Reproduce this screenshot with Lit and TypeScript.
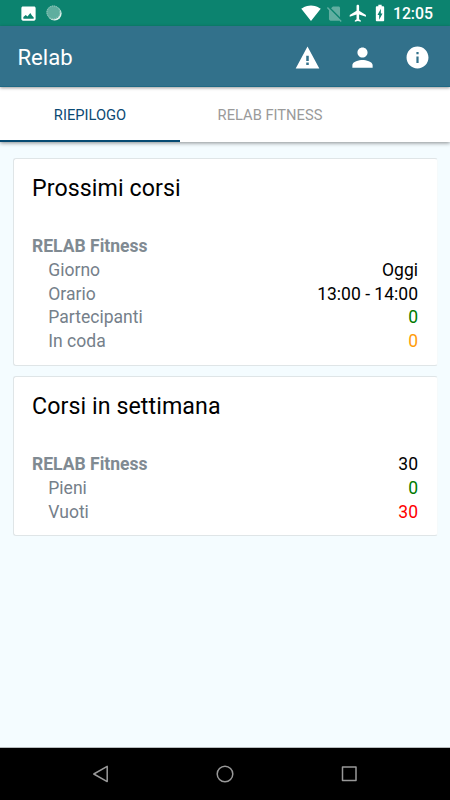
import { LitElement, html, css, svg } from "lit";
import { customElement, property } from "lit/decorators.js";

interface Row {
  label: string;
  value: string;
  tone?: string;
  head?: boolean;
}

@customElement("info-card")
class InfoCard extends LitElement {
  @property() heading = "";
  @property({ attribute: false }) rows: Row[] = [];

  static styles = css`
    :host {
      display: block;
      box-sizing: border-box;
      background: #fff;
      border: 1px solid #dfe5e7;
      border-right-color: #f5fafb;
      border-radius: 3px;
      padding: 0 18.5px 12px 18px;
    }
    .heading {
      height: 75px;
      line-height: 58px;
      font-size: 23.2px;
      letter-spacing: 0.08px;
      color: #000;
    }
    .row {
      display: flex;
      justify-content: space-between;
      height: 23.8px;
      line-height: 24px;
      font-size: 17.55px;
      color: #000;
    }
    .label {
      color: #75808a;
      padding-left: 16.3px;
    }
    .head {
      font-weight: 700;
      padding-left: 0;
      color: #808a92;
    }
    .green { color: #007a00; }
    .orange { color: #ff9d0a; }
    .red { color: #ff0000; }
  `;

  render() {
    return html`
      <div class="heading">${this.heading}</div>
      ${this.rows.map(
        (r) => html`<div class="row">
          <span class="label ${r.head ? "head" : ""}">${r.label}</span>
          <span class=${r.tone ?? ""}>${r.value}</span>
        </div>`
      )}
    `;
  }
}

const icon = (cls: string, box: string, d: string) =>
  html`<svg class=${cls} viewBox=${box} fill="currentColor">${svg`<path d=${d} />`}</svg>`;

const WIFI = "M12.01 21.49L23.64 7c-.45-.34-4.93-4-11.64-4C5.28 3 .81 6.66.36 7l11.63 14.49.01.01.01-.01z";
const NO_SIM = "M18.99 5c0-1.1-.89-2-1.99-2h-7L7.66 5.34 19 16.68 18.99 5zM3.65 3.88L2.38 5.15 5 7.77V19c0 1.1.9 2 2 2h10.01c.35 0 .67-.1.96-.26l1.88 1.88 1.27-1.27L3.65 3.88z";
const PLANE = "M21 16v-2l-8-5V3.5c0-.83-.67-1.5-1.5-1.5S10 2.67 10 3.5V9l-8 5v2l8-2.5V19l-2 1.5V22l3.5-1 3.5 1v-1.5L13 19v-5.5l8 2.5z";
const BATTERY = "M15.67 4H14V2h-4v2H8.33C7.6 4 7 4.6 7 5.33v15.33C7 21.4 7.6 22 8.33 22h7.33c.74 0 1.34-.6 1.34-1.33V5.33C17 4.6 16.4 4 15.67 4zM11 20v-5.5H9L13 7v5.5h2L11 20z";
const PHOTO = "M21 19V5c0-1.1-.9-2-2-2H5c-1.1 0-2 .9-2 2v14c0 1.1.9 2 2 2h14c1.1 0 2-.9 2-2zM5.5 18.5V16.5l3-2.5 2.2 1.8 3.6-4.3 2.2 3.2 2 2V18.5z";
const WARNING = "M32 464h448L256 48 32 464zm248-64h-48v-48h48v48zm0-80h-48v-96h48v96z";
const PERSON = "M256 256c52.805 0 96-43.201 96-96s-43.195-96-96-96-96 43.201-96 96 43.195 96 96 96zm0 48c-63.598 0-192 32.402-192 96v48h384v-48c0-63.598-128.402-96-192-96z";
const INFO = "M256 48C141.125 48 48 141.125 48 256s93.125 208 208 208 208-93.125 208-208S370.875 48 256 48zm21 312h-42V235h42v125zm0-166h-42v-42h42v42z";

@customElement("app-root")
class AppRoot extends LitElement {
  static styles = css`
    :host {
      display: flex;
      flex-direction: column;
      width: 450px;
      height: 800px;
      overflow: hidden;
      background: #f4fcff;
      font-family: Roboto, sans-serif;
    }
    svg { display: block; flex: none; }
    .status {
      display: flex;
      align-items: center;
      height: 26px;
      box-sizing: border-box;
      padding: 0 17px 0 19px;
      background: #0c836f;
      color: #fff;
    }
    .photo { width: 19px; height: 19px; }
    .dot { width: 16px; height: 16px; margin-left: 8.3px; }
    .wifi { width: 20px; height: 20px; margin-left: auto; }
    .sim { width: 19px; height: 19px; margin-left: 4px; opacity: 0.35; }
    .plane { width: 20.5px; height: 20.5px; margin-left: 4px; }
    .battery { width: 20px; height: 20px; margin-left: 1.5px; }
    .time {
      margin-left: 2.5px;
      font-size: 15.8px;
      font-weight: 500;
      line-height: 26px;
      padding-top: 2px;
    }
    .bar {
      display: flex;
      align-items: center;
      gap: 27.6px;
      height: 61px;
      box-sizing: border-box;
      padding: 2px 19.5px 0 17.5px;
      background: #32718b;
      border-bottom: 1px solid #1f6984;
      color: #fff;
      box-shadow: 0 1px 3px rgba(0, 0, 0, 0.4);
      z-index: 2;
    }
    .title { flex: 1; font-size: 22.1px; line-height: 28px; }
    .action { width: 27px; height: 27px; }
    .tabs {
      display: flex;
      height: 55px;
      background: #fff;
      box-shadow: 0 1px 4px rgba(0, 0, 0, 0.45);
      z-index: 1;
    }
    .tab {
      width: 180px;
      box-sizing: border-box;
      text-align: center;
      font-size: 14.7px;
      line-height: 57px;
      color: #9a9a9a;
    }
    .active {
      color: #0b4a74;
      border-bottom: 2px solid #064a72;
    }
    .content {
      display: flex;
      flex-direction: column;
      gap: 10px;
      flex: 1;
      padding: 16px 12.5px 0 13px;
    }
    .first { height: 208px; }
    .second { height: 160px; }
    .nav {
      display: flex;
      justify-content: space-between;
      align-items: center;
      height: 53px;
      box-sizing: border-box;
      padding: 0 91px;
      border-top: 1px solid #b7bcbe;
      background: #000;
    }
    .key { width: 20px; height: 20px; }
  `;

  render() {
    return html`
      <div class="status">
        ${icon("photo", "0 0 24 24", PHOTO)}
        <svg class="dot" viewBox="0 0 16 16">
          <circle cx="8.6" cy="8.6" r="7" fill="#e4f3ef" />
          <circle cx="7.4" cy="7.4" r="7" fill="#5fae9f" />
          <circle cx="7.4" cy="7.4" r="6.4" fill="none" stroke="#9bcdc2" stroke-width="1" stroke-dasharray="1 1" />
        </svg>
        ${icon("wifi", "0 0 24 24", WIFI)}
        ${icon("sim", "0 0 24 24", NO_SIM)}
        ${icon("plane", "0 0 24 24", PLANE)}
        ${icon("battery", "0 0 24 24", BATTERY)}
        <span class="time">12:05</span>
      </div>
      <div class="bar">
        <span class="title">Relab</span>
        ${icon("action", "0 0 512 512", WARNING)}
        ${icon("action", "0 0 512 512", PERSON)}
        ${icon("action", "0 0 512 512", INFO)}
      </div>
      <div class="tabs">
        <div class="tab active">RIEPILOGO</div>
        <div class="tab">RELAB FITNESS</div>
      </div>
      <div class="content">
        <info-card
          class="first"
          heading="Prossimi corsi"
          .rows=${[
            { label: "RELAB Fitness", value: "", head: true },
            { label: "Giorno", value: "Oggi" },
            { label: "Orario", value: "13:00 - 14:00" },
            { label: "Partecipanti", value: "0", tone: "green" },
            { label: "In coda", value: "0", tone: "orange" },
          ]}
        ></info-card>
        <info-card
          class="second"
          heading="Corsi in settimana"
          .rows=${[
            { label: "RELAB Fitness", value: "30", head: true },
            { label: "Pieni", value: "0", tone: "green" },
            { label: "Vuoti", value: "30", tone: "red" },
          ]}
        ></info-card>
      </div>
      <div class="nav">
        <svg class="key" viewBox="0 0 20 20" fill="none" stroke="#999" stroke-width="1.5" stroke-linejoin="round">
          <path d="M16.2 2.4V17.6L2.8 10Z" />
        </svg>
        <svg class="key" viewBox="0 0 20 20" fill="none" stroke="#999" stroke-width="1.5">
          <circle cx="10" cy="10" r="7.8" />
        </svg>
        <svg class="key" viewBox="0 0 20 20" fill="none" stroke="#999" stroke-width="1.5" stroke-linejoin="round">
          <rect x="3.5" y="3" width="13.5" height="13.5" />
        </svg>
      </div>
    `;
  }
}
